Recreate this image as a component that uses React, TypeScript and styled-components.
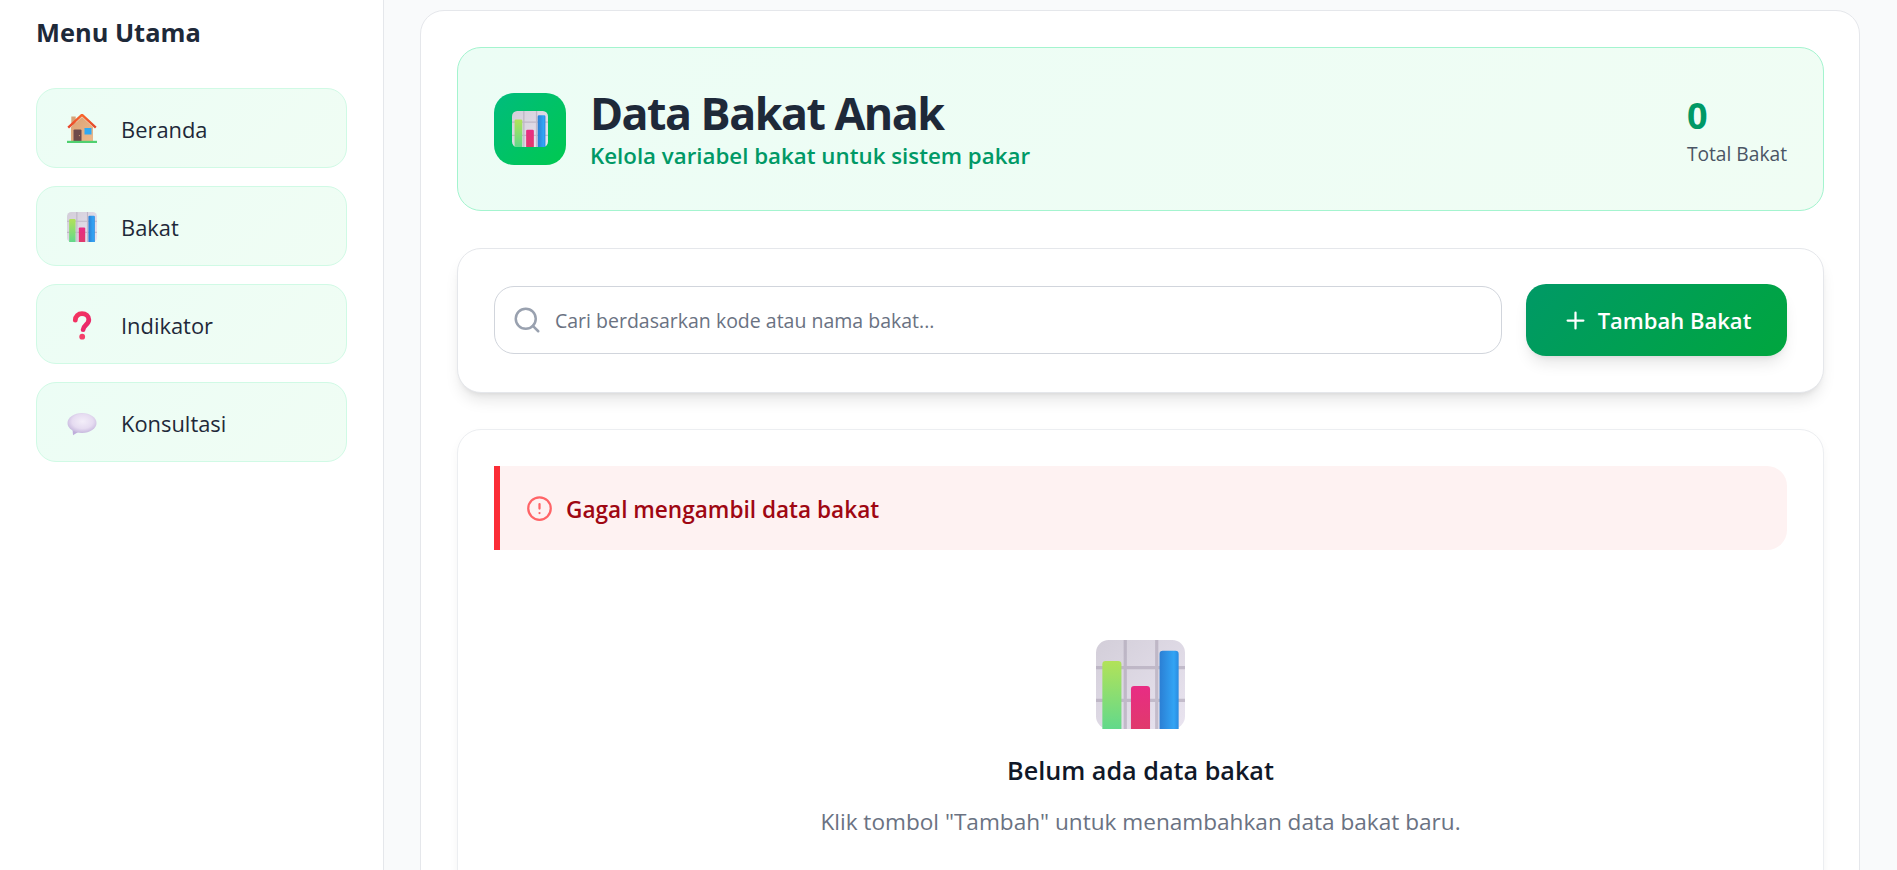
// App.tsx
import React, { useId } from "react";
import styled, { createGlobalStyle } from "styled-components";
import { CircleAlert, Plus, Search } from "lucide-react";

const GlobalStyle = createGlobalStyle`
  html, body {
    margin: 0;
    padding: 0;
    height: 100%;
    overflow: hidden;
    background: #f9fafb;
    font-family: "Open Sans", "Noto Sans", Arial, sans-serif;
  }
  * {
    box-sizing: border-box;
  }
`;

const Layout = styled.div`
  display: flex;
  height: 870px;
  overflow: hidden;
`;

const Sidebar = styled.aside`
  width: 384px;
  flex-shrink: 0;
  background: #ffffff;
  border-right: 1px solid #e5e7eb;
  padding: 15px 36px 0;
`;

const SidebarTitle = styled.h2`
  margin: 0 0 39px;
  font-size: 25.4px;
  line-height: 34px;
  font-weight: 700;
  color: #1e2939;
`;

const Menu = styled.nav`
  display: flex;
  flex-direction: column;
  gap: 18.5px;
  width: 311px;
`;

const MenuItem = styled.a`
  display: flex;
  align-items: center;
  gap: 24px;
  height: 79.5px;
  padding: 3px 30px 0;
  background: linear-gradient(135deg, #ecfdf5, #f0fdf4);
  border: 1px solid #d0fae5;
  border-radius: 20px;
  font-size: 21.9px;
  color: #1e2939;
`;

const Main = styled.main`
  flex: 1;
  min-width: 0;
  padding: 10px 37px 0 36px;
`;

const Panel = styled.div`
  background: #ffffff;
  border: 1px solid #e5e7eb;
  border-radius: 24px;
  padding: 36px 35px 36px 36px;
  display: flex;
  flex-direction: column;
  gap: 36.5px;
  height: 1200px;
`;

const Hero = styled.header`
  display: flex;
  align-items: center;
  justify-content: space-between;
  height: 164px;
  padding: 0 36px;
  background: linear-gradient(135deg, #ecfdf5, #f0fdf4);
  border: 1px solid #a4f4cf;
  border-radius: 24px;
`;

const HeroLeft = styled.div`
  display: flex;
  align-items: center;
  gap: 24px;
`;

const HeroIcon = styled.div`
  width: 72px;
  height: 72px;
  display: flex;
  align-items: center;
  justify-content: center;
  border-radius: 20px;
  background: linear-gradient(135deg, #00bc7d, #00c950);
`;

const HeroTitle = styled.h1`
  margin: 0;
  font-size: 44.8px;
  line-height: 54px;
  font-weight: 700;
  color: #1e2939;
  letter-spacing: -1.55px;
`;

const HeroSubtitle = styled.p`
  margin: 0;
  font-size: 22.3px;
  line-height: 32px;
  font-weight: 600;
  color: #009966;
`;

const Stat = styled.div`
  display: flex;
  flex-direction: column;
`;

const StatValue = styled.span`
  font-size: 36px;
  line-height: 49px;
  font-weight: 700;
  color: #009966;
`;

const StatLabel = styled.span`
  font-size: 19.2px;
  line-height: 27px;
  color: #4a5565;
`;

const Toolbar = styled.section`
  display: flex;
  align-items: center;
  gap: 24px;
  height: 145px;
  padding: 0 36px;
  background: #ffffff;
  border: 1px solid #e5e7eb;
  border-radius: 24px;
  box-shadow: 0 10px 15px -3px rgba(0, 0, 0, 0.1), 0 4px 6px -4px rgba(0, 0, 0, 0.1);
`;

const SearchBox = styled.label`
  flex: 1;
  display: flex;
  align-items: center;
  gap: 13px;
  height: 68px;
  padding: 0 17px;
  border: 1px solid #d1d5dc;
  border-radius: 20px;
  color: #99a1af;
`;

const SearchInput = styled.input`
  flex: 1;
  min-width: 0;
  border: 0;
  outline: 0;
  padding: 0;
  background: transparent;
  font-family: inherit;
  font-size: 19.5px;
  color: #1e2939;

  &::placeholder {
    color: #6a7282;
    opacity: 1;
  }
`;

const AddButton = styled.button`
  display: flex;
  align-items: center;
  justify-content: center;
  gap: 9px;
  width: 261px;
  height: 72px;
  padding: 0;
  border: 0;
  border-radius: 20px;
  background: linear-gradient(135deg, #009966, #00a63e);
  box-shadow: 0 10px 15px -3px rgba(0, 0, 0, 0.1), 0 4px 6px -4px rgba(0, 0, 0, 0.1);
  color: #ffffff;
  font-family: inherit;
  font-size: 22px;
  font-weight: 600;
`;

const ResultCard = styled.section`
  padding: 36px;
  background: #ffffff;
  border: 1px solid #eceef1;
  border-radius: 24px;
  box-shadow: 0 4px 12px -2px rgba(0, 0, 0, 0.06);
`;

const ErrorAlert = styled.div`
  display: flex;
  align-items: center;
  gap: 13px;
  height: 84px;
  padding: 0 26px;
  background: #fef2f2;
  border-left: 6px solid #fb2c36;
  border-radius: 0 20px 20px 0;
  color: #ff6467;
`;

const ErrorText = styled.span`
  font-size: 22.6px;
  line-height: 32px;
  padding-top: 4px;
  font-weight: 600;
  color: #9f0712;
`;

const EmptyState = styled.div`
  display: flex;
  flex-direction: column;
  align-items: center;
  padding: 90px 0 80px;
`;

const EmptyTitle = styled.h3`
  margin: 24px 0 0;
  font-size: 25.2px;
  line-height: 34px;
  font-weight: 600;
  color: #101828;
`;

const EmptyText = styled.p`
  margin: 18px 0 0;
  font-size: 22.6px;
  line-height: 34px;
  color: #6a7282;
`;

function ChartEmoji({ size }: { size: number }) {
  const id = useId();
  return (
    <svg width={size} height={size} viewBox="2 2 28 28" aria-hidden="true">
      <defs>
        <linearGradient id={`${id}bg`} x1="0" y1="0" x2="1" y2="1">
          <stop offset="0" stopColor="#d3ced9" />
          <stop offset="1" stopColor="#e9e4f0" />
        </linearGradient>
        <linearGradient id={`${id}g`} x1="0" y1="0" x2="0" y2="1">
          <stop offset="0" stopColor="#b2e259" />
          <stop offset="1" stopColor="#62d98b" />
        </linearGradient>
        <linearGradient id={`${id}p`} x1="0" y1="0" x2="0" y2="1">
          <stop offset="0" stopColor="#e82c84" />
          <stop offset="1" stopColor="#e03a6c" />
        </linearGradient>
        <linearGradient id={`${id}b`} x1="0" y1="0" x2="1" y2="0">
          <stop offset="0" stopColor="#2b7fd4" />
          <stop offset="0.75" stopColor="#32a4f4" />
          <stop offset="1" stopColor="#2a8be0" />
        </linearGradient>
      </defs>
      <rect x="2" y="2" width="28" height="28" rx="4" fill={`url(#${id}bg)`} />
      <path
        d="M11.2 2v28M21.1 2v28M2 10.7h28M2 21h28"
        stroke="#a89fb0"
        strokeOpacity="0.55"
        strokeWidth="1"
        fill="none"
      />
      <path d="M4 9.6a1 1 0 0 1 1-1h4a1 1 0 0 1 1 1V30H4z" fill={`url(#${id}g)`} />
      <path d="M13 17.5a1 1 0 0 1 1-1h4a1 1 0 0 1 1 1V30h-6z" fill={`url(#${id}p)`} />
      <path d="M22 6.4a1 1 0 0 1 1-1h4a1 1 0 0 1 1 1V30h-6z" fill={`url(#${id}b)`} />
    </svg>
  );
}

function HouseEmoji() {
  const id = useId();
  return (
    <svg width={30} height={30} viewBox="0 0 30 30" aria-hidden="true">
      <defs>
        <linearGradient id={`${id}w`} x1="0" y1="0" x2="1" y2="1">
          <stop offset="0" stopColor="#dca275" />
          <stop offset="1" stopColor="#eab98c" />
        </linearGradient>
        <linearGradient id={`${id}r`} x1="0" y1="0" x2="1" y2="0">
          <stop offset="0" stopColor="#e8452c" />
          <stop offset="0.5" stopColor="#f9672c" />
          <stop offset="1" stopColor="#e2472b" />
        </linearGradient>
      </defs>
      <rect x="4.3" y="2.5" width="4.4" height="9" fill="#d6a377" />
      <path d="M4 13 15 3l11 10v14H4z" fill={`url(#${id}w)`} />
      <path
        d="M1.2 13.6 15 .8l13.8 12.8"
        fill="none"
        stroke={`url(#${id}r)`}
        strokeWidth="2.4"
        strokeLinejoin="round"
      />
      <path d="M6.5 27V16.6a1.2 1.2 0 0 1 1.2-1.2h5.6a1.2 1.2 0 0 1 1.2 1.2V27z" fill="#6f4a4a" />
      <circle cx="12.4" cy="21.6" r=".6" fill="#d6a377" />
      <rect x="17.5" y="14" width="7" height="6.6" rx=".4" fill="#2ea9f3" />
      <rect x="0" y="26.8" width="30" height="2.2" fill="#4fd06f" />
    </svg>
  );
}

function QuestionEmoji() {
  const id = useId();
  return (
    <svg width={30} height={30} viewBox="0 0 30 30" aria-hidden="true">
      <defs>
        <linearGradient id={`${id}q`} x1="0" y1="0" x2="1" y2="1">
          <stop offset="0" stopColor="#f4355f" />
          <stop offset="1" stopColor="#e8276d" />
        </linearGradient>
      </defs>
      <path
        d="M8.3 10.2C8.3 6.2 11.3 3.6 15 3.6c3.8 0 6.8 2.5 6.8 6.1 0 5-5.6 5.4-5.7 10"
        fill="none"
        stroke={`url(#${id}q)`}
        strokeWidth="4.8"
        strokeLinecap="round"
      />
      <circle cx="15.2" cy="26.7" r="2.9" fill="#f4406a" />
    </svg>
  );
}

function SpeechEmoji() {
  const id = useId();
  return (
    <svg width={30} height={30} viewBox="0 0 30 30" aria-hidden="true">
      <defs>
        <radialGradient id={`${id}s`} cx="0.52" cy="0.42" r="0.6">
          <stop offset="0" stopColor="#f3eef9" />
          <stop offset="0.6" stopColor="#e6dcf1" />
          <stop offset="1" stopColor="#c4b5dc" />
        </radialGradient>
      </defs>
      <path d="M5.5 20.5 6 27.2l6-3.6z" fill="#bfaedb" />
      <ellipse cx="15" cy="15" rx="14.5" ry="10" fill={`url(#${id}s)`} />
    </svg>
  );
}

const menuItems = [
  { label: "Beranda", icon: <HouseEmoji /> },
  { label: "Bakat", icon: <ChartEmoji size={30} /> },
  { label: "Indikator", icon: <QuestionEmoji /> },
  { label: "Konsultasi", icon: <SpeechEmoji /> },
];

export default function App() {
  return (
    <Layout>
      <GlobalStyle />
      <Sidebar>
        <SidebarTitle>Menu Utama</SidebarTitle>
        <Menu>
          {menuItems.map((item) => (
            <MenuItem key={item.label}>
              {item.icon}
              {item.label}
            </MenuItem>
          ))}
        </Menu>
      </Sidebar>
      <Main>
        <Panel>
          <Hero>
            <HeroLeft>
              <HeroIcon>
                <ChartEmoji size={36} />
              </HeroIcon>
              <div>
                <HeroTitle>Data Bakat Anak</HeroTitle>
                <HeroSubtitle>Kelola variabel bakat untuk sistem pakar</HeroSubtitle>
              </div>
            </HeroLeft>
            <Stat>
              <StatValue>0</StatValue>
              <StatLabel>Total Bakat</StatLabel>
            </Stat>
          </Hero>
          <Toolbar>
            <SearchBox>
              <Search size={30} strokeWidth={2} />
              <SearchInput placeholder="Cari berdasarkan kode atau nama bakat..." />
            </SearchBox>
            <AddButton>
              <Plus size={27} strokeWidth={2} />
              Tambah Bakat
            </AddButton>
          </Toolbar>
          <ResultCard>
            <ErrorAlert>
              <CircleAlert size={27} strokeWidth={2} />
              <ErrorText>Gagal mengambil data bakat</ErrorText>
            </ErrorAlert>
            <EmptyState>
              <ChartEmoji size={89} />
              <EmptyTitle>Belum ada data bakat</EmptyTitle>
              <EmptyText>Klik tombol "Tambah" untuk menambahkan data bakat baru.</EmptyText>
            </EmptyState>
          </ResultCard>
        </Panel>
      </Main>
    </Layout>
  );
}
